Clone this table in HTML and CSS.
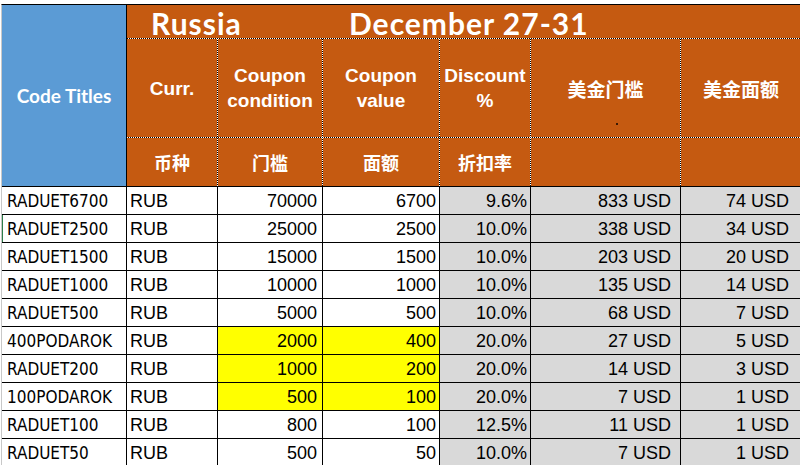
FILE: index.html
```html
<!DOCTYPE html>
<html>
<head>
<meta charset="utf-8">
<link rel="stylesheet" href="styles.css">
</head>
<body>
<div class="sheet">
  <div class="code-head">Code Titles</div>
  <div class="hdr">
    <div class="h-title"><span class="t-country">Russia</span><span class="t-date">December 27-31</span></div>
    <div class="h-cell">Curr.</div>
    <div class="h-cell">Coupon<br>condition</div>
    <div class="h-cell">Coupon<br>value</div>
    <div class="h-cell">Discount<br>%</div>
    <div class="h-cell h-cjk h-big h-mark">美金门槛<span class="speck"></span></div>
    <div class="h-cell h-cjk h-big">美金面额</div>
    <div class="h-cell h-cjk">币种</div>
    <div class="h-cell h-cjk">门槛</div>
    <div class="h-cell h-cjk">面额</div>
    <div class="h-cell h-cjk">折扣率</div>
    <div class="h-cell"></div>
    <div class="h-cell"></div>
  </div>

  <div class="c code">RADUET6700</div><div class="c cur">RUB</div><div class="c num p5">70000</div><div class="c num">6700</div><div class="c num gray">9.6%</div><div class="c num gray usd">833 USD</div><div class="c num gray usd2">74 USD</div>
  <div class="c code sel">RADUET2500</div><div class="c cur">RUB</div><div class="c num p5">25000</div><div class="c num">2500</div><div class="c num gray">10.0%</div><div class="c num gray usd">338 USD</div><div class="c num gray usd2">34 USD</div>
  <div class="c code">RADUET1500</div><div class="c cur">RUB</div><div class="c num p5">15000</div><div class="c num">1500</div><div class="c num gray">10.0%</div><div class="c num gray usd">203 USD</div><div class="c num gray usd2">20 USD</div>
  <div class="c code">RADUET1000</div><div class="c cur">RUB</div><div class="c num p5">10000</div><div class="c num">1000</div><div class="c num gray">10.0%</div><div class="c num gray usd">135 USD</div><div class="c num gray usd2">14 USD</div>
  <div class="c code">RADUET500</div><div class="c cur">RUB</div><div class="c num p5">5000</div><div class="c num">500</div><div class="c num gray">10.0%</div><div class="c num gray usd">68 USD</div><div class="c num gray usd2">7 USD</div>
  <div class="c code">400PODAROK</div><div class="c cur">RUB</div><div class="c num p5 yellow">2000</div><div class="c num yellow">400</div><div class="c num gray">20.0%</div><div class="c num gray usd">27 USD</div><div class="c num gray usd2">5 USD</div>
  <div class="c code">RADUET200</div><div class="c cur">RUB</div><div class="c num p5 yellow">1000</div><div class="c num yellow">200</div><div class="c num gray">20.0%</div><div class="c num gray usd">14 USD</div><div class="c num gray usd2">3 USD</div>
  <div class="c code">100PODAROK</div><div class="c cur">RUB</div><div class="c num p5 yellow">500</div><div class="c num yellow">100</div><div class="c num gray">20.0%</div><div class="c num gray usd">7 USD</div><div class="c num gray usd2">1 USD</div>
  <div class="c code">RADUET100</div><div class="c cur">RUB</div><div class="c num p5">800</div><div class="c num">100</div><div class="c num gray">12.5%</div><div class="c num gray usd">11 USD</div><div class="c num gray usd2">1 USD</div>
  <div class="c code">RADUET50</div><div class="c cur">RUB</div><div class="c num p5">500</div><div class="c num">50</div><div class="c num gray">10.0%</div><div class="c num gray usd">7 USD</div><div class="c num gray usd2">1 USD</div>
</div>
</body>
</html>
```
FILE: styles.css
```css
html, body {
  margin: 0;
  padding: 0;
  background: #fff;
  overflow: hidden;
}
body {
  width: 800px;
  height: 465px;
}
.sheet {
  margin: 4px 0 0 1px;
  border-top: 1px solid #000;
  border-left: 1px solid #c8c8c8;
  display: grid;
  grid-template-columns: 124px 90px 104px 116px 90px 149px 120px;
  grid-template-rows: 181px;
  grid-auto-rows: 27px;
  gap: 1px;
  background: #000;
  width: 799px;
}
.code-head {
  grid-row: 1;
  grid-column: 1;
  background: #5b9bd5;
  color: #fff;
  font-family: "Lato", "Open Sans", sans-serif;
  font-weight: 700;
  font-size: 19px;
  display: flex;
  align-items: center;
  justify-content: center;
  box-sizing: border-box;
}
.hdr {
  grid-row: 1;
  grid-column: 2 / -1;
  display: grid;
  grid-template-columns: 90px 104px 116px 90px 149px 120px;
  grid-template-rows: 33px 98px 48px;
  gap: 1px;
  background: conic-gradient(#000 25%, #fff 0 50%, #000 0 75%, #fff 0) 0 0 / 2px 2px;
}
.h-title {
  grid-column: 1 / -1;
  background: #c55a11;
  color: #fff;
  font-family: "Lato", "Open Sans", sans-serif;
  font-weight: 700;
  font-size: 30px;
  letter-spacing: 1px;
  line-height: 30px;
  padding-top: 3px;
  box-sizing: border-box;
  display: flex;
  align-items: flex-start;
  overflow: hidden;
}
.t-country {
  padding-left: 24px;
  width: 198px;
  flex: none;
}
.h-cell {
  background: #c55a11;
  color: #fff;
  font-family: "Liberation Sans", Arial, sans-serif;
  font-weight: 700;
  font-size: 19px;
  line-height: 25px;
  display: flex;
  align-items: center;
  justify-content: center;
  text-align: center;
}
.h-cjk {
  font-family: "Noto Sans CJK SC", "Liberation Sans", sans-serif;
  font-size: 18px;
}
.h-big {
  font-size: 19px;
}
.h-mark {
  position: relative;
}
.speck {
  position: absolute;
  left: 85px;
  top: 84px;
  width: 2px;
  height: 2px;
  background: #3a1a05;
}
.c {
  background: #fff;
  color: #000;
  font-family: "Liberation Sans", Arial, sans-serif;
  font-size: 18px;
  line-height: 27px;
  padding-top: 1px;
  box-sizing: border-box;
  white-space: nowrap;
  overflow: hidden;
}
.code {
  font-family: "DejaVu Sans Condensed", "DejaVu Sans", sans-serif;
  font-stretch: condensed;
  font-size: 17px;
  padding-left: 5px;
}
.sel {
  box-shadow: inset 1px 0 #2e7d4a;
}
.cur {
  padding-left: 3px;
}
.num {
  text-align: right;
  padding-right: 3px;
}
.p5 {
  padding-right: 5px;
}
.usd {
  padding-right: 9px;
}
.usd2 {
  padding-right: 12px;
}
.gray {
  background: #d9d9d9;
}
.yellow {
  background: #ffff00;
}
```
